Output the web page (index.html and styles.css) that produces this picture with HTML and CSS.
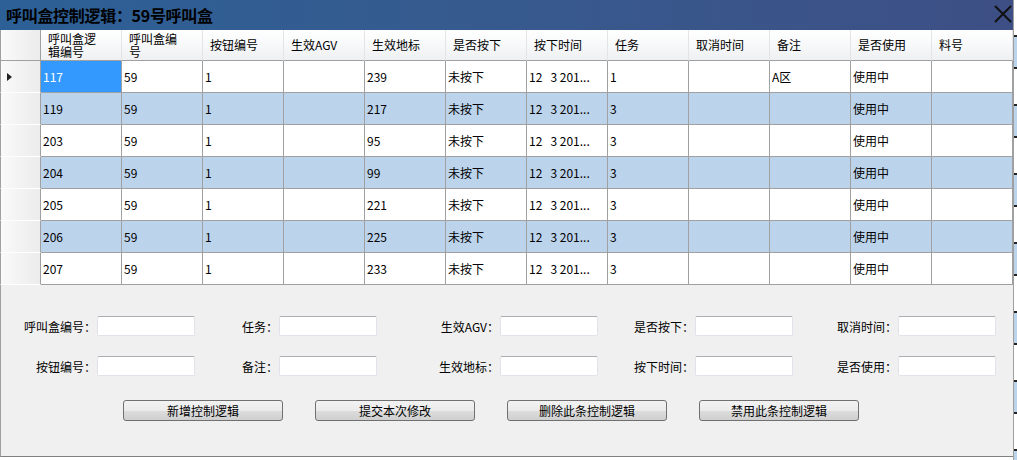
FILE: index.html
```html
<!DOCTYPE html>
<html>
    <head>
        <meta charset="utf-8">
        <link rel="stylesheet" href="styles.css">
    </head>
    <body>
    <div class="page">
        <div class="window">
            <div class="titlebar">
                <span class="title">呼叫盒控制逻辑：59号呼叫盒</span>
                <svg class="close" width="18" height="18" viewBox="0 0 18 18">
                    <path d="M1 1 L17 17 M17 1 L1 17" stroke="#111" stroke-width="2" fill="none"/>
                </svg>
            </div>
            <table class="grid">
                <colgroup>
                    <col class="c-head">
                    <col class="c"><col class="c"><col class="c"><col class="c">
                    <col class="c"><col class="c"><col class="c"><col class="c">
                    <col class="c"><col class="c"><col class="c"><col class="c">
                </colgroup>
                <thead>
                    <tr>
                        <th class="rowhead"></th>
                        <th class="two"><span class="line">呼叫盒逻</span><span class="line">辑编号</span></th>
                        <th class="two"><span class="line">呼叫盒编</span><span class="line">号</span></th>
                        <th>按钮编号</th>
                        <th>生效AGV</th>
                        <th>生效地标</th>
                        <th>是否按下</th>
                        <th>按下时间</th>
                        <th>任务</th>
                        <th>取消时间</th>
                        <th>备注</th>
                        <th>是否使用</th>
                        <th>料号</th>
                    </tr>
                </thead>
                <tbody>
                    <tr>
                        <td class="rowhead"><span class="arrow"></span></td>
                        <td class="selected">117</td><td>59</td><td>1</td><td></td><td>239</td><td>未按下</td><td>12&nbsp;&nbsp;&nbsp;3 201...</td><td>1</td><td></td><td>A区</td><td>使用中</td><td></td>
                    </tr>
                    <tr class="alt">
                        <td class="rowhead"></td>
                        <td>119</td><td>59</td><td>1</td><td></td><td>217</td><td>未按下</td><td>12&nbsp;&nbsp;&nbsp;3 201...</td><td>3</td><td></td><td></td><td>使用中</td><td></td>
                    </tr>
                    <tr>
                        <td class="rowhead"></td>
                        <td>203</td><td>59</td><td>1</td><td></td><td>95</td><td>未按下</td><td>12&nbsp;&nbsp;&nbsp;3 201...</td><td>3</td><td></td><td></td><td>使用中</td><td></td>
                    </tr>
                    <tr class="alt">
                        <td class="rowhead"></td>
                        <td>204</td><td>59</td><td>1</td><td></td><td>99</td><td>未按下</td><td>12&nbsp;&nbsp;&nbsp;3 201...</td><td>3</td><td></td><td></td><td>使用中</td><td></td>
                    </tr>
                    <tr>
                        <td class="rowhead"></td>
                        <td>205</td><td>59</td><td>1</td><td></td><td>221</td><td>未按下</td><td>12&nbsp;&nbsp;&nbsp;3 201...</td><td>3</td><td></td><td></td><td>使用中</td><td></td>
                    </tr>
                    <tr class="alt">
                        <td class="rowhead"></td>
                        <td>206</td><td>59</td><td>1</td><td></td><td>225</td><td>未按下</td><td>12&nbsp;&nbsp;&nbsp;3 201...</td><td>3</td><td></td><td></td><td>使用中</td><td></td>
                    </tr>
                    <tr>
                        <td class="rowhead"></td>
                        <td>207</td><td>59</td><td>1</td><td></td><td>233</td><td>未按下</td><td>12&nbsp;&nbsp;&nbsp;3 201...</td><td>3</td><td></td><td></td><td>使用中</td><td></td>
                    </tr>
                </tbody>
            </table>
            <div class="panel">
                <div class="form">
                    <label>呼叫盒编号：</label><input type="text">
                    <label>任务：</label><input type="text">
                    <label>生效AGV：</label><input type="text">
                    <label>是否按下：</label><input type="text">
                    <label>取消时间：</label><input type="text">
                    <label>按钮编号：</label><input type="text">
                    <label>备注：</label><input type="text">
                    <label>生效地标：</label><input type="text">
                    <label>按下时间：</label><input type="text">
                    <label>是否使用：</label><input type="text">
                </div>
                <div class="buttons">
                    <button class="button">新增控制逻辑</button>
                    <button class="button">提交本次修改</button>
                    <button class="button">删除此条控制逻辑</button>
                    <button class="button">禁用此条控制逻辑</button>
                </div>
            </div>
        </div>
        <div class="edge"></div>
    </div>
    </body>
</html>
```

FILE: styles.css
```css
body {
    margin: 0;
    background-color: #ffffff;
    font-family: "Noto Sans CJK SC", "DejaVu Sans", sans-serif;
    font-size: 12px;
    color: #000;
}
.page {
    display: flex;
    height: 460px;
    overflow: hidden;
}
.window {
    width: 1013px;
    flex: none;
}
.edge {
    flex: 1;
    border-left: 1px solid #a0a0a0;
    background: repeating-linear-gradient(to bottom, #ffffff 0, #ffffff 35px, #222 35px, #222 37px, #bcd3ec 37px, #bcd3ec 67px, #222 67px, #222 69px);
}
.titlebar {
    height: 30px;
    display: flex;
    align-items: center;
    justify-content: space-between;
    padding: 0 1px 0 6px;
    background: linear-gradient(to right, #2c6096, #375a8e 50%, #3d4f85);
}
.title {
    font-size: 16px;
    font-weight: bold;
    letter-spacing: -0.3px;
    color: #000;
    margin-top: -1px;
}
.close {
    margin-top: -3px;
}
.grid {
    table-layout: fixed;
    border-collapse: separate;
    border-spacing: 0;
    width: 1013px;
}
.c-head {
    width: 41px;
}
.c {
    width: 81px;
}
.grid th,
.grid td {
    box-sizing: border-box;
    padding: 0 0 0 3px;
    text-align: left;
    white-space: nowrap;
    overflow: hidden;
    font-weight: normal;
}
.grid th {
    height: 31px;
    padding-left: 7px;
    line-height: 12px;
    border-right: 1px solid #e4e4e4;
    border-bottom: 1px solid #a0a0a0;
    background: linear-gradient(to bottom, #ffffff, #f7f8fa 50%, #eef0f2);
}
.grid th.two {
    vertical-align: top;
    padding-top: 2px;
}
.grid th .line {
    display: block;
    height: 13px;
    line-height: 13px;
}
.grid td {
    height: 32px;
    line-height: 16px;
    padding-left: 2px;
    border-right: 1px solid #a0a0a0;
    border-bottom: 1px solid #a0a0a0;
    background-color: #ffffff;
}
.grid tr.alt td {
    background-color: #bcd3ec;
}
.grid td.selected {
    background-color: #3399ff;
    color: #ffffff;
}
.grid .rowhead,
.grid tr.alt td.rowhead {
    position: relative;
    border-right: 1px solid #a0a0a0;
    border-bottom: 1px solid #ffffff;
    border-left: 1px solid #a0a0a0;
    background: linear-gradient(to right, #fafafa, #f6f6f6 25%, #ececec);
}
.grid th.rowhead {
    border-bottom: 1px solid #a0a0a0;
}
.arrow {
    position: absolute;
    left: 6px;
    top: 12px;
    width: 0;
    height: 0;
    border-top: 4px solid transparent;
    border-bottom: 4px solid transparent;
    border-left: 5px solid #222;
}
.panel {
    height: 172px;
    box-sizing: border-box;
    padding-top: 31px;
    background-color: #f0f0f0;
    border-bottom: 1px solid #808080;
    border-left: 1px solid #a0a0a0;
}
.form {
    display: grid;
    grid-template-columns: 96px 98px 84px 98px 123px 98px 97px 98px 105px 98px;
    row-gap: 20px;
    align-items: center;
}
.form label {
    text-align: right;
    padding-right: 1px;
    white-space: nowrap;
}
.form input {
    box-sizing: border-box;
    width: 98px;
    height: 20px;
    margin: 0;
    border: 1px solid #e2e3ea;
    border-top-color: #abadb3;
    border-radius: 2px;
    background-color: #ffffff;
}
.buttons {
    display: flex;
    gap: 32px;
    padding-left: 122px;
    margin-top: 24px;
}
.button {
    width: 160px;
    height: 21px;
    padding: 0;
    font-family: "Noto Sans CJK SC", sans-serif;
    font-size: 12px;
    line-height: 17px;
    color: #000;
    border: 1px solid #707070;
    border-radius: 3px;
    background: linear-gradient(to bottom, #f2f2f2, #ebebeb 50%, #dddddd 51%, #cfcfcf);
}
```
